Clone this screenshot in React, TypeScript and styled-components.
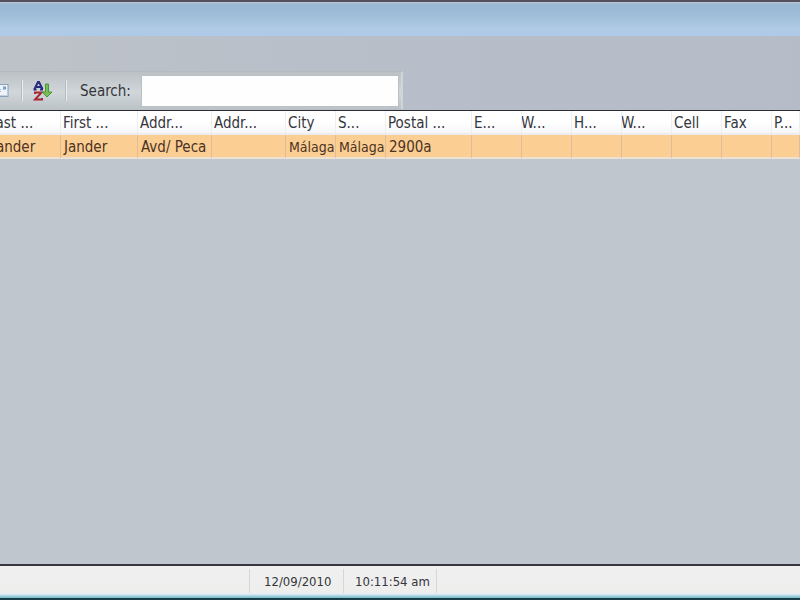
import React from "react";
import styled, { createGlobalStyle } from "styled-components";

const GlobalStyle = createGlobalStyle`
  *, *::before, *::after { box-sizing: border-box; }
  body {
    margin: 0;
    overflow: hidden;
    font-family: "DejaVu Sans Condensed", "DejaVu Sans", Tahoma, sans-serif;
    color: #34363b;
  }
`;

const Window = styled.div`
  display: flex;
  flex-direction: column;
  height: 100vh;
  overflow: hidden;
  background: #bfc6cd;
`;

const TitleBar = styled.header`
  flex: none;
  height: 36px;
  border-top: 2px solid #55525f;
  background: linear-gradient(#c5c6d8 0, #9bb9d3 2px, #9dbbd6 10px, #aecae5 26px, #b0caea 34px);
`;

const ToolArea = styled.div`
  flex: none;
  display: flex;
  align-items: flex-end;
  height: 74px;
  background: linear-gradient(90deg, #bdc2c8, #b7bec9 55%, #b6bcc7);
`;

const Toolbar = styled.div`
  display: flex;
  align-items: center;
  height: 38px;
  margin: 0 0 1px -12px;
  padding-right: 2px;
  border-right: 2px solid #d0d5d6;
  border-top: 1px solid #b4babd;
  background: linear-gradient(#bbc1c5, #d0d6d9 55%, #bcc3c6);
`;

const ToolButton = styled.button`
  display: flex;
  align-items: center;
  justify-content: center;
  width: 22px;
  height: 28px;
  padding: 0;
  border: 0;
  background: none;
`;

const Separator = styled.span`
  width: 2px;
  height: 21px;
  margin: 0 9px 0 11px;
  border-left: 1px solid #b7bec2;
  border-right: 1px solid #e8ecec;
`;

const SearchLabel = styled.label`
  margin-left: 4px;
  margin-right: 10px;
  font-size: 15px;
  line-height: 20px;
`;

const SearchInput = styled.input`
  width: 258px;
  height: 32px;
  padding: 0 6px;
  border: 1px solid #b9c0c3;
  outline: none;
  background: #fefefe;
  font: inherit;
  font-size: 15px;
`;

const Content = styled.main`
  flex: 1;
  min-height: 0;
  overflow: hidden;
  border-top: 1px solid #292c33;
`;

const Table = styled.table`
  width: calc(100% + 14px);
  margin-left: -14px;
  border-collapse: separate;
  border-spacing: 0;
  table-layout: fixed;
  font-size: 15px;
  line-height: 20px;
`;

const Col = styled.col<{ $width?: number }>`
  width: ${({ $width }) => ($width ? `${$width}px` : "auto")};
`;

const HeadCell = styled.th<{ $clipped?: boolean }>`
  height: 24px;
  padding: 2px 0 0 2px;
  overflow: hidden;
  border-right: 1px solid #eceff2;
  border-bottom: 2px solid #ececef;
  background: linear-gradient(#ffffff 50%, #f5f6f8);
  font-weight: normal;
  text-align: left;
  white-space: nowrap;
  text-indent: ${({ $clipped }) => ($clipped ? "-3px" : "0")};
`;

const Cell = styled.td<{ $dense?: boolean }>`
  height: 24px;
  padding: 2px 0 0 3px;
  overflow: hidden;
  border-right: 1px solid #dfbd9c;
  border-bottom: 2px solid #ebe2d5;
  background: #fbce93;
  color: #4b3325;
  font-size: ${({ $dense }) => ($dense ? 14 : 15)}px;
  white-space: nowrap;

  &:first-child {
    padding-left: 6px;
  }
`;

const StatusBar = styled.footer`
  flex: none;
  display: flex;
  align-items: center;
  height: 36px;
  padding-left: 249px;
  border-top: 2px solid #36373f;
  border-bottom: 2px solid #163d49;
  background: linear-gradient(#f0f0f1, #eeeeed 26px, #e5edf5 28px, #a5d2df 30px, #79b4c5);
`;

const StatusItem = styled.span<{ $width: number; $last?: boolean }>`
  width: ${({ $width }) => $width}px;
  height: 24px;
  margin-bottom: 2px;
  padding-left: ${({ $last }) => ($last ? 11 : 14)}px;
  border-left: 1px solid #d5d8d9;
  border-right: ${({ $last }) => ($last ? "1px solid #d5d8d9" : "0")};
  font-size: 13px;
  line-height: 26px;
  white-space: nowrap;
`;

const MailIcon = () => (
  <svg width="20" height="16" viewBox="0 0 20 16" aria-hidden="true">
    <rect x="1" y="1.5" width="18" height="12" fill="#edf3f8" stroke="#88a0b9" />
    <path d="M2 12.5h16" stroke="#c2d0dd" />
    <path d="M4 6.5h8M4 8.5h8" stroke="#a5bace" />
    <rect x="14" y="3.5" width="3" height="3" fill="#789cc9" />
  </svg>
);

const SortIcon = () => (
  <svg width="20" height="20" viewBox="0 0 20 20" aria-hidden="true">
    <path d="M1.5 8 5 1h1l3.5 7M3 6h5M.5 8.5h3M7 8.5h3" fill="none" stroke="#292c7e" strokeWidth="2" />
    <path d="M2 13v-1.5h6.5L2 18.5h7V17" fill="none" stroke="#a62836" strokeWidth="2" />
    <path d="M12.5 3h3v8H19l-5 5-5-5h3.5z" fill="#79bd50" stroke="#4b963a" />
  </svg>
);

type Column = {
  title: string;
  value: string;
  width?: number;
  clipped?: boolean;
  dense?: boolean;
};

const columns: Column[] = [
  { title: "Last ...", value: "Jander", width: 75 },
  { title: "First ...", value: "Jander", width: 77 },
  { title: "Addr...", value: "Avd/ Peca", width: 74 },
  { title: "Addr...", value: "", width: 74 },
  { title: "City", value: "Málaga", width: 50, dense: true },
  { title: "S...", value: "Málaga", width: 50, dense: true },
  { title: "Postal ...", value: "2900a", width: 86 },
  { title: "E...", value: "", width: 50 },
  { title: "W...", value: "", width: 50, clipped: true },
  { title: "H...", value: "", width: 50 },
  { title: "W...", value: "", width: 50, clipped: true },
  { title: "Cell", value: "", width: 50 },
  { title: "Fax", value: "", width: 50 },
  { title: "P...", value: "" },
];

export default function App() {
  return (
    <>
      <GlobalStyle />
      <Window>
        <TitleBar />
        <ToolArea>
          <Toolbar role="toolbar">
            <ToolButton type="button" aria-label="Mail"><MailIcon /></ToolButton>
            <Separator />
            <ToolButton type="button" aria-label="Sort"><SortIcon /></ToolButton>
            <Separator />
            <SearchLabel htmlFor="search">Search:</SearchLabel>
            <SearchInput id="search" type="text" />
          </Toolbar>
        </ToolArea>
        <Content>
          <Table>
            <colgroup>
              {columns.map((c, i) => <Col key={i} $width={c.width} />)}
            </colgroup>
            <thead>
              <tr>
                {columns.map((c, i) => (
                  <HeadCell key={i} scope="col" $clipped={c.clipped}>{c.title}</HeadCell>
                ))}
              </tr>
            </thead>
            <tbody>
              <tr>
                {columns.map((c, i) => <Cell key={i} $dense={c.dense}>{c.value}</Cell>)}
              </tr>
            </tbody>
          </Table>
        </Content>
        <StatusBar>
          <StatusItem $width={94}>12/09/2010</StatusItem>
          <StatusItem $width={94} $last>10:11:54 am</StatusItem>
        </StatusBar>
      </Window>
    </>
  );
}
